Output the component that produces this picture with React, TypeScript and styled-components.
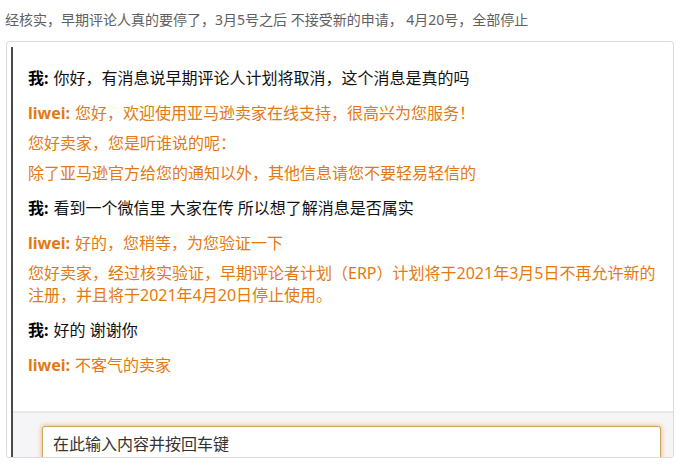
import React from "react";
import styled, { createGlobalStyle } from "styled-components";

const Global = createGlobalStyle`
  html, body { margin: 0; padding: 0; background: #fff; }
  body { font-family: "Noto Sans", "Noto Sans CJK SC", sans-serif; }
`;

const Page = styled.div`
  width: 685px;
  height: 467px;
  overflow: hidden;
`;

const Notice = styled.div`
  padding: 9px 0 0 5px;
  height: 32px;
  box-sizing: border-box;
  font-size: 14px;
  line-height: 22px;
  color: #606060;
`;

const Frame = styled.div`
  margin: 9px 11px 0 6px;
  height: 417px;
  border: 1px solid #dcdcdc;
  border-radius: 3px;
  box-sizing: border-box;
  overflow: hidden;
  display: flex;
  flex-direction: column;
  padding: 5px 0 0 4px;
  background: #fff;
`;

const Panel = styled.div`
  flex: 1;
  display: flex;
  flex-direction: column;
  border-left: 2px solid #4a4a4a;
  min-height: 0;
`;

const Log = styled.div`
  height: 366px;
  flex-shrink: 0;
  box-sizing: border-box;
  padding: 20px 10px 0 15px;
  display: flex;
  flex-direction: column;
  gap: 13px;
  border-bottom: 2px solid #e8e8ea;
`;

const Group = styled.div`
  display: flex;
  flex-direction: column;
  gap: 8px;
`;

const Line = styled.p<{ $agent?: boolean }>`
  margin: 0;
  font-size: 16px;
  line-height: 22px;
  color: ${(p) => (p.$agent ? "#e47911" : "#111")};
`;

const Who = styled.b<{ $agent?: boolean }>`
  font-weight: 700;
  margin-right: 5px;
  color: ${(p) => (p.$agent ? "#e47911" : "#000")};
`;

const Composer = styled.div`
  flex: 1;
  background: #f5f5f7;
  padding: 13px 12px 0 29px;
`;

const Input = styled.div`
  height: 50px;
  box-sizing: border-box;
  border: 1px solid #c9a45a;
  border-radius: 3px;
  background: #fff;
  box-shadow: 0 0 4px 1px rgba(240, 150, 60, 0.55);
  padding: 5px 10px;
  font-size: 16px;
  line-height: 24px;
  color: #333;
`;

type Msg = { agent: boolean; lines: string[] };

const messages: Msg[] = [
  { agent: false, lines: ["你好，有消息说早期评论人计划将取消，这个消息是真的吗"] },
  {
    agent: true,
    lines: [
      "您好，欢迎使用亚马逊卖家在线支持，很高兴为您服务！",
      "您好卖家，您是听谁说的呢：",
      "除了亚马逊官方给您的通知以外，其他信息请您不要轻易轻信的",
    ],
  },
  { agent: false, lines: ["看到一个微信里 大家在传 所以想了解消息是否属实"] },
  {
    agent: true,
    lines: [
      "好的，您稍等，为您验证一下",
      "您好卖家，经过核实验证，早期评论者计划（ERP）计划将于2021年3月5日不再允许新的注册，并且将于2021年4月20日停止使用。",
    ],
  },
  { agent: false, lines: ["好的 谢谢你"] },
  { agent: true, lines: ["不客气的卖家"] },
];

export default function App() {
  return (
    <Page>
      <Global />
      <Notice>经核实，早期评论人真的要停了，3月5号之后 不接受新的申请， 4月20号，全部停止</Notice>
      <Frame>
        <Panel>
          <Log>
            {messages.map((m, i) => (
              <Group key={i}>
                {m.lines.map((t, j) => (
                  <Line key={j} $agent={m.agent}>
                    {j === 0 && <Who $agent={m.agent}>{m.agent ? "liwei:" : "我:"}</Who>}
                    {t}
                  </Line>
                ))}
              </Group>
            ))}
          </Log>
          <Composer>
            <Input>在此输入内容并按回车键</Input>
          </Composer>
        </Panel>
      </Frame>
    </Page>
  );
}
